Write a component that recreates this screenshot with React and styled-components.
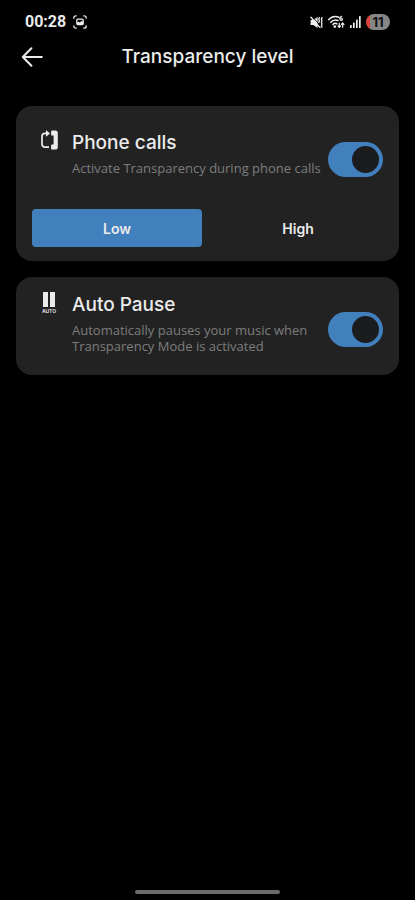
import React, { useState } from 'react'
import styled, { createGlobalStyle } from 'styled-components'

const GlobalStyle = createGlobalStyle`
  * {
    box-sizing: border-box;
  }

  body {
    margin: 0;
    background: #000;
    color: #ebebeb;
    font-family: Inter, Roboto, sans-serif;
  }

  button {
    font: inherit;
    color: inherit;
    border: 0;
    padding: 0;
    background: none;
    cursor: pointer;
  }
`

const CaptureIcon = () => (
  <svg width="14" height="14" viewBox="0 0 14 14" fill="none" stroke="#eee" strokeWidth="1.3" strokeLinecap="round">
    <path d="M.8 3.2V2.8a2 2 0 0 1 2-2h.4M10.8.8h.4a2 2 0 0 1 2 2v.4M13.2 10.8v.4a2 2 0 0 1-2 2h-.4M3.2 13.2h-.4a2 2 0 0 1-2-2v-.4" />
    <rect x="3.8" y="4.2" width="6.4" height="5.4" rx="1" />
    <path d="M4 9.4V7.6l1.7-.8 1.2.8 1.8-1.8 1.5 1.4v2.2z" fill="#eee" stroke="none" />
  </svg>
)

const MuteIcon = () => (
  <svg width="13" height="13" viewBox="0 0 13 13" fill="none" stroke="#eee" strokeWidth="1.3" strokeLinecap="round">
    <path d="M.6 4h2.6l4.4-3v11L3.2 9H.6z" fill="#eee" stroke="none" />
    <path d="M2.2.6l9 10" stroke="#000" strokeWidth=".8" />
    <path d="M.9 1.2l9.2 10.4" />
    <path d="M9.4 1.6l-.6 1.6.6 1.6-.6 1.6M12 1.6l-.6 1.6.6 1.6-.6 1.6.6 1.6-.6 1.6.6 1.6" />
  </svg>
)

const WifiIcon = () => (
  <svg width="17" height="14" viewBox="0 0 17 14" fill="none" stroke="#eee" strokeWidth="1.5" strokeLinecap="round">
    <path d="M.8 4.6C3.5 1.6 7.5.9 10.8 2.2M2.8 7.2c2-2.2 4.8-2.7 7.2-1.7M4.9 9.5c1.2-1.2 2.8-1.4 4-.6" />
    <circle cx="6.8" cy="11.6" r="1.3" fill="#eee" stroke="none" />
    <path d="M13.6 1.2c-1.2.4-1.7 1.4-1.7 2.5" strokeWidth="1.2" />
    <circle cx="13.2" cy="4.2" r="1.2" strokeWidth="1.2" />
    <path d="M11.3 8.2v4M10 11l1.3 1.4 1.3-1.4M14.7 12.2v-4M13.4 9.4L14.7 8l1.3 1.4" strokeWidth="1.2" />
  </svg>
)

const SignalIcon = () => (
  <svg width="11" height="12" viewBox="0 0 11 12" fill="#eee">
    <rect x="0" y="9" width="1.7" height="3" rx=".6" />
    <rect x="3" y="6.4" width="1.7" height="5.6" rx=".6" />
    <rect x="6" y="3.6" width="1.7" height="8.4" rx=".6" />
    <rect x="9" y="0" width="1.7" height="12" rx=".6" />
  </svg>
)

const BackIcon = () => (
  <svg width="22" height="20" viewBox="0 0 22 20" fill="none" stroke="#ebebeb" strokeWidth="2" strokeLinecap="round" strokeLinejoin="round">
    <path d="M10.4 1.2L1.8 10l8.6 8.8M1.8 10h19" />
  </svg>
)

const PhoneIcon = () => (
  <svg width="18" height="20" viewBox="0 0 18 20">
    <path d="M9 17.2H5a3 3 0 0 1-3-3V6.4a3 3 0 0 1 3-3h2.2" fill="none" stroke="#ebebeb" strokeWidth="1.7" />
    <path d="M6 0l4 3.4-4 3.4z" fill="#ebebeb" />
    <path d="M12 .4h3.4c1.6 0 2.4 1 2.4 2.6v14c0 1.6-.8 2.6-2.4 2.6H12c-.6 0-.9-.3-.9-.9v-3.4c0-.6.3-.9.9-.9h1.6V5.6H12c-.6 0-.9-.3-.9-.9V1.3c0-.6.3-.9.9-.9z" fill="#ebebeb" />
  </svg>
)

const PauseIcon = () => (
  <svg width="18" height="22" viewBox="0 0 18 22" fill="#ebebeb">
    <rect x="3" y="0" width="5" height="15" />
    <rect x="10" y="0" width="5" height="15" />
    <text x="9" y="21" textAnchor="middle" fontSize="5" fontWeight="600">AUTO</text>
  </svg>
)

const App = () => {
  const [level, setLevel] = useState('Low')

  return (
    <Screen>
      <GlobalStyle />
      <StatusBar>
        <Time>00:28</Time>
        <CaptureIcon />
        <StatusIcons>
          <MuteIcon />
          <WifiIcon />
          <SignalIcon />
          <Battery>11</Battery>
        </StatusIcons>
      </StatusBar>

      <Header>
        <BackButton type="button" aria-label="Back">
          <BackIcon />
        </BackButton>
        <PageTitle>Transparency level</PageTitle>
      </Header>

      <Cards>
        <Card $tall>
          <Setting>
            <PhoneIcon />
            <SettingText>
              <SettingTitle htmlFor="phone-calls">Phone calls</SettingTitle>
              <Description>Activate Transparency during phone calls</Description>
            </SettingText>
            <Switch id="phone-calls" type="checkbox" role="switch" defaultChecked />
          </Setting>
          <Levels>
            {['Low', 'High'].map(name => (
              <LevelButton
                key={name}
                type="button"
                $active={level === name}
                aria-pressed={level === name}
                onClick={() => setLevel(name)}
              >
                {name}
              </LevelButton>
            ))}
          </Levels>
        </Card>

        <Card>
          <Setting>
            <PauseIcon />
            <SettingText>
              <SettingTitle htmlFor="auto-pause">Auto Pause</SettingTitle>
              <Description>Automatically pauses your music when Transparency Mode is activated</Description>
            </SettingText>
            <Switch id="auto-pause" type="checkbox" role="switch" defaultChecked />
          </Setting>
        </Card>
      </Cards>

      <HomeBar />
    </Screen>
  )
}

export default App


const Screen = styled.div`
  min-height: 100vh;
  display: flex;
  flex-direction: column;
`

const StatusBar = styled.div`
  display: flex;
  align-items: center;
  gap: 7px;
  height: 36px;
  padding: 8px 25px 0;
`

const Time = styled.span`
  font-family: Roboto, sans-serif;
  font-size: 16px;
  font-weight: 700;
  line-height: 20px;
`

const StatusIcons = styled.div`
  display: flex;
  align-items: center;
  gap: 5px;
  margin-left: auto;
`

const Battery = styled.span`
  width: 24px;
  border-radius: 8px;
  background: linear-gradient(90deg, #d8443c 4px, #858585 4px);
  color: #111;
  font-size: 13px;
  font-weight: 700;
  line-height: 16px;
  text-align: center;
`

const Header = styled.header`
  display: grid;
  grid-template-columns: 22px 1fr 22px;
  align-items: center;
  height: 42px;
  padding: 0 21px;
`

const BackButton = styled.button`
  display: flex;
`

const PageTitle = styled.h1`
  margin: 0;
  font-size: 19px;
  font-weight: 500;
  line-height: 24px;
  text-align: center;
`

const Cards = styled.main`
  display: flex;
  flex-direction: column;
  gap: 16px;
  padding: 28px 16px;
`

const Card = styled.section`
  padding: ${props => (props.$tall ? '24px 16px 14px' : '15px 16px 21px')};
  border-radius: 16px;
  background: #222;
`

const Setting = styled.div`
  display: flex;
  align-items: center;

  > svg {
    align-self: flex-start;
    flex: none;
    margin: 0 14px 0 8px;
  }
`

const SettingText = styled.div`
  flex: 1;
  align-self: flex-start;
  min-width: 0;
`

const SettingTitle = styled.label`
  display: block;
  margin-bottom: 5px;
  font-size: 19px;
  font-weight: 500;
  line-height: 25px;
`

const Description = styled.p`
  margin: 0;
  color: #7d7d7d;
  font-family: "Open Sans", sans-serif;
  font-size: 13px;
  font-weight: 500;
  line-height: 16px;
`

const Switch = styled.input`
  appearance: none;
  flex: none;
  display: flex;
  align-items: center;
  width: 55px;
  height: 35px;
  margin: 12px 0 0;
  padding: 4px;
  border-radius: 18px;
  background: #555;
  cursor: pointer;

  &::before {
    content: '';
    width: 27px;
    height: 27px;
    border-radius: 50%;
    background: #1b1c1e;
  }

  &:checked {
    justify-content: flex-end;
    background: #427fbd;
  }
`

const Levels = styled.div`
  display: grid;
  grid-template-columns: 1fr 1fr;
  gap: 11px;
  margin-top: 32px;
`

const LevelButton = styled.button`
  && {
    height: 38px;
    border-radius: 4px;
    background: ${props => (props.$active ? '#427fbd' : 'transparent')};
    font-size: 14px;
    font-weight: 600;
  }
`

const HomeBar = styled.div`
  width: 35%;
  height: 4px;
  margin: auto auto 6px;
  border-radius: 2px;
  background: #6b6b6b;
`
